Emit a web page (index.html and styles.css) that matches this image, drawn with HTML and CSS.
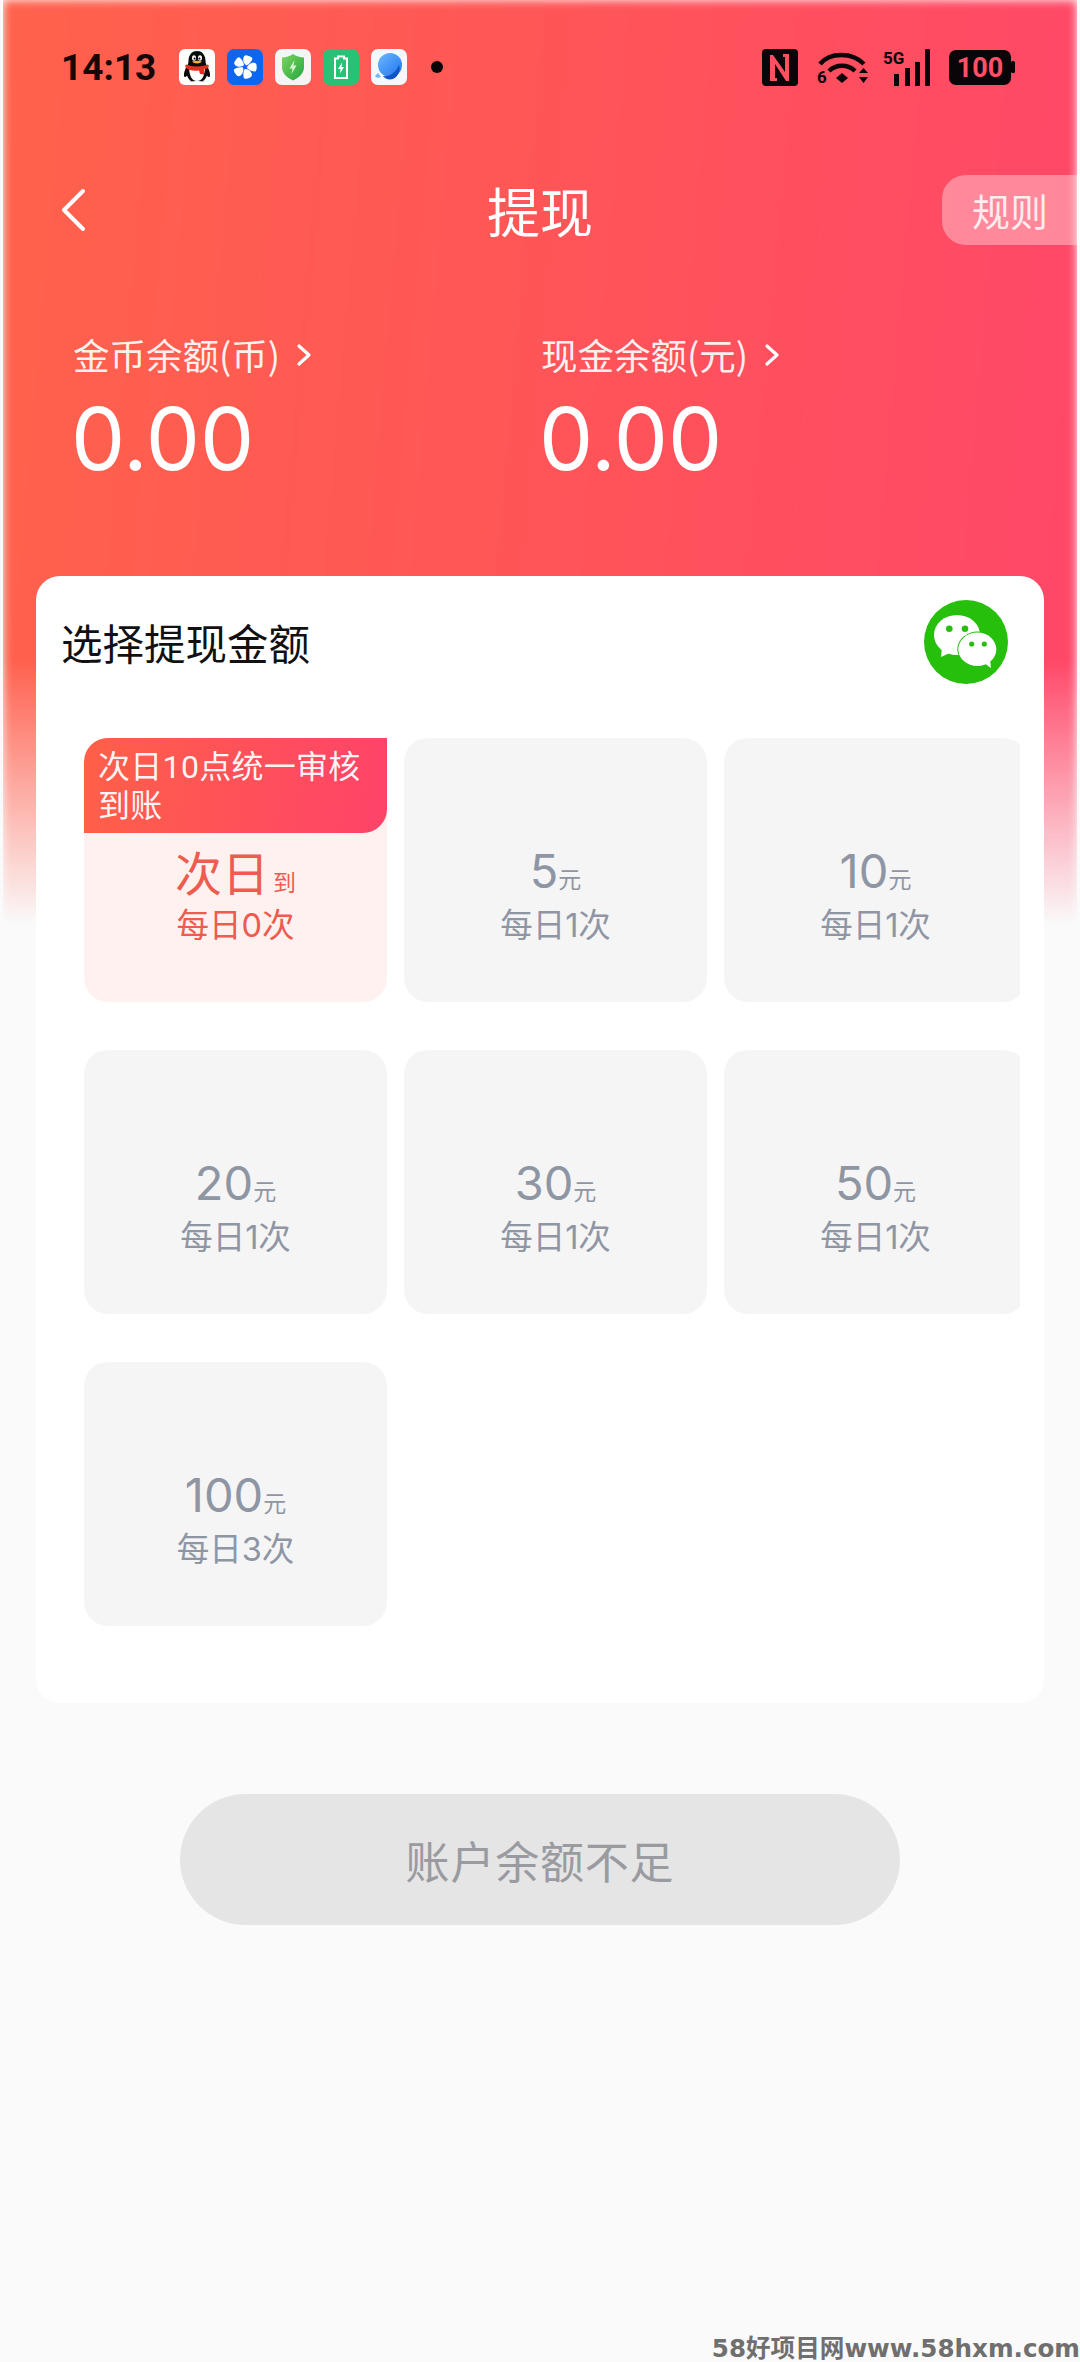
FILE: index.html
```html
<!DOCTYPE html>
<html lang="zh-CN">
<head>
<meta charset="utf-8">
<title>提现</title>
<link rel="stylesheet" href="styles.css">
</head>
<body>
<div class="page">
  <div class="hero-bg"></div>
  <div class="status">
    <span class="time">14:13</span>
    <svg class="app" viewBox="0 0 36 36"><rect width="36" height="36" rx="6" fill="#fff"/><path d="M18 2c-6 0-8.500 5-8.500 10 0 2-.5 3-1.500 5-2 3.500-3.500 7-3 10 .5 2 2 1 3-.5 1 3 3 5 4 5.500h12c1-.5 3-2.500 4-5.500 1 1.500 2.500 2.500 3 .5.500-3-1-6.500-3-10-1-2-1.500-3-1.500-5C26.500 7 24 2 18 2z" fill="#0b0b0b"/><path d="M10 20c1 8 3 12 8 12s7-4 8-12z" fill="#fff"/><path d="M7 15.500c6 2.500 16 2.500 22 0 1 1 1 2.500 0 3.500l-4 1.500 0 5-4-.5-1-3.500c-4 .5-7 0-9.500-.5l-3.500-2c-1-1-1-2.500 0-3.500z" fill="#e5301f"/><ellipse cx="15" cy="9" rx="2" ry="2.800" fill="#fff"/><ellipse cx="21" cy="9" rx="2" ry="2.800" fill="#fff"/><circle cx="15.500" cy="9.500" r="1" fill="#000"/><circle cx="20.500" cy="9.500" r="1" fill="#000"/><path d="M13 12.500c3-1 7-1 10 0-2 2.500-8 2.500-10 0z" fill="#f5b120"/><path d="M10 33c2-1.500 5-1.500 6.500 0zM19.500 33c2-1.500 5-1.500 6.500 0z" fill="#f5b120"/></svg>
    <svg class="app" viewBox="0 0 36 36"><rect width="36" height="36" rx="7" fill="#0e66ee"/><g fill="#fff"><path d="M19.500 16.500c-2.500-1.500-4-5-3-8 .5-1.500 2-2.500 3.500-2 2.500.5 5 1.500 5.500 3-1 3-3 5.500-6 7z"/><path d="M19.500 16.500c-2.500-1.500-4-5-3-8 .5-1.500 2-2.500 3.500-2 2.500.5 5 1.500 5.500 3-1 3-3 5.500-6 7z" transform="rotate(72 18 18)"/><path d="M19.500 16.500c-2.500-1.500-4-5-3-8 .5-1.500 2-2.500 3.500-2 2.500.5 5 1.500 5.500 3-1 3-3 5.500-6 7z" transform="rotate(144 18 18)"/><path d="M19.500 16.500c-2.500-1.500-4-5-3-8 .5-1.500 2-2.500 3.500-2 2.500.5 5 1.500 5.500 3-1 3-3 5.500-6 7z" transform="rotate(216 18 18)"/><path d="M19.500 16.500c-2.500-1.500-4-5-3-8 .5-1.500 2-2.500 3.500-2 2.500.5 5 1.500 5.500 3-1 3-3 5.500-6 7z" transform="rotate(288 18 18)"/></g></svg>
    <svg class="app" viewBox="0 0 36 36"><defs><linearGradient id="sg" x1="0" y1="0" x2="1" y2="1"><stop offset="0" stop-color="#7bd45c"/><stop offset="1" stop-color="#26a642"/></linearGradient></defs><rect width="36" height="36" rx="7" fill="#f3f6f4"/><path d="M18 5c3 2 7 3.500 11 3.500V18c0 6-4.500 10.500-11 13.500C11.500 28.500 7 24 7 18V8.500C11 8.500 15 7 18 5z" fill="url(#sg)"/><path d="M19.500 11l-5 8.500h3l-1 5.500 5-8.500h-3z" fill="#d8f5d0"/></svg>
    <svg class="app" viewBox="0 0 36 36"><rect width="36" height="36" rx="7" fill="#28c277"/><path d="M15 7.500h6v2h3v19.500H12V9.500h3z" fill="none" stroke="#fff" stroke-width="2"/><path d="M19 13.500l-4 6.500h2.500l-.5 4.500 4-6.500h-2.500z" fill="#fff"/></svg>
    <svg class="app" viewBox="0 0 36 36"><defs><linearGradient id="pg" x1="0" y1="0" x2="1" y2="1"><stop offset="0" stop-color="#6db8ff"/><stop offset="1" stop-color="#1c74ee"/></linearGradient></defs><rect width="36" height="36" rx="7" fill="#f4f8fc"/><circle cx="19" cy="16" r="12" fill="url(#pg)"/><path d="M4 27c1 2 4 2 6 1l-3-4z" fill="#6fb6ff"/><path d="M12 27c6 1 13-3 16-11 2 5-1 12-6 14-4 1-8 0-10-3z" fill="#1253c9"/></svg>
    <span class="dot"></span>
    <div class="status-right">
      <svg class="nfc" viewBox="0 0 36 37"><rect width="36" height="37" rx="4" fill="#0a0508"/><path d="M8 6h3l12 17V8h-2V5h6v27h-3L13 15v14h2v3H8z" fill="#ff5060"/></svg>
      <svg class="wifi" viewBox="0 0 54 37"><path d="M5 15C15 3 37 3 49 15" fill="none" stroke="#0a0508" stroke-width="4.500"/><path d="M14 22c7-7 19-7 26 0" fill="none" stroke="#0a0508" stroke-width="4.500"/><path d="M21 29l6-5 6 5-6 5z" fill="#0a0508"/><text class="wifi-six" x="2" y="34">6</text><path d="M44 24l4.500-5 4.500 5zM44 28l4.500 6 4.500-6z" fill="#0a0508"/></svg>
      <svg class="signal" viewBox="0 0 48 37"><text class="fiveg" x="0" y="15">5G</text><rect x="11" y="25" width="5" height="12" fill="#0a0508"/><rect x="22" y="19" width="5" height="18" fill="#0a0508"/><rect x="32" y="13" width="5" height="24" fill="#0a0508"/><rect x="42" y="0" width="5" height="37" rx="1" fill="#0a0508"/></svg>
      <svg class="battery" viewBox="0 0 66 35"><rect width="62" height="35" rx="7" fill="#0a0508"/><rect x="62" y="11" width="4" height="12" rx="1.500" fill="#0a0508"/><text class="batt-text" x="31" y="27">100</text></svg>
    </div>
  </div>

  <div class="nav">
    <svg class="back" viewBox="0 0 26 44"><path d="M23 3L4 22l19 19" fill="none" stroke="#fff" stroke-width="4" stroke-linecap="round" stroke-linejoin="round"/></svg>
    <h1 class="title">提现</h1>
    <div class="rule">规则</div>
  </div>

  <div class="balances">
    <div class="balance">
      <div class="label">金币余额(币)<svg class="chev" viewBox="0 0 16 24"><path d="M3 3l10 9-10 9" fill="none" stroke="#fff" stroke-width="3.200" stroke-linecap="round" stroke-linejoin="round"/></svg></div>
      <div class="amount">0.00</div>
    </div>
    <div class="balance">
      <div class="label">现金余额(元)<svg class="chev" viewBox="0 0 16 24"><path d="M3 3l10 9-10 9" fill="none" stroke="#fff" stroke-width="3.200" stroke-linecap="round" stroke-linejoin="round"/></svg></div>
      <div class="amount">0.00</div>
    </div>
  </div>

  <section class="card">
    <div class="card-head">
      <h2 class="card-title">选择提现金额</h2>
      <svg class="wechat" viewBox="0 0 84 84"><circle cx="42" cy="42" r="42" fill="#25bf0c"/><ellipse cx="33" cy="35" rx="23" ry="20" fill="#fff"/><path d="M18 47l-1 10 13-6z" fill="#fff"/><ellipse cx="53.300" cy="49.300" rx="20" ry="17.700" fill="#25bf0c"/><ellipse cx="53.300" cy="49.300" rx="19" ry="16.700" fill="#fff"/><path d="M60 63l7 5-1-9z" fill="#fff"/><circle cx="25.300" cy="28.700" r="3.300" fill="#25bf0c"/><circle cx="41" cy="28.700" r="3.300" fill="#25bf0c"/><circle cx="47.700" cy="44" r="2.600" fill="#25bf0c"/><circle cx="60.300" cy="44" r="2.600" fill="#25bf0c"/></svg>
    </div>
    <div class="grid-clip">
      <div class="grid">
        <div class="tile active">
          <div class="badge">次日10点统一审核到账</div>
          <div class="num"><span class="big big-cjk">次日</span><span class="unit unit-gap">到</span></div>
          <div class="sub">每日0次</div>
        </div>
        <div class="tile"><div class="num"><span class="big">5</span><span class="unit">元</span></div><div class="sub">每日1次</div></div>
        <div class="tile"><div class="num"><span class="big">10</span><span class="unit">元</span></div><div class="sub">每日1次</div></div>
        <div class="tile"><div class="num"><span class="big">20</span><span class="unit">元</span></div><div class="sub">每日1次</div></div>
        <div class="tile"><div class="num"><span class="big">30</span><span class="unit">元</span></div><div class="sub">每日1次</div></div>
        <div class="tile"><div class="num"><span class="big">50</span><span class="unit">元</span></div><div class="sub">每日1次</div></div>
        <div class="tile"><div class="num"><span class="big">100</span><span class="unit">元</span></div><div class="sub">每日3次</div></div>
      </div>
    </div>
  </section>

  <button class="submit" type="button">账户余额不足</button>

  <div class="watermark">58好项目网www.58hxm.com</div>
</div>
</body>
</html>
```
FILE: styles.css
```css
* { box-sizing: border-box; }
html, body { margin: 0; padding: 0; }
body {
  background: #fafafa;
  font-family: Roboto, "Noto Sans CJK SC", sans-serif;
  color: #111;
}
.page {
  position: relative;
  width: 1080px;
  height: 2362px;
  overflow: hidden;
  background: #fafafa;
}
.hero-bg {
  position: absolute;
  left: 3px;
  right: 3px;
  top: 0;
  height: 930px;
  background: linear-gradient(95deg, #ff624c 0%, #ff5656 45%, #ff4769 100%);
  -webkit-mask-image: linear-gradient(180deg, #000 0, #000 660px, transparent 925px);
  mask-image: linear-gradient(180deg, #000 0, #000 660px, transparent 925px);
  filter: blur(5px);
}
.status {
  position: relative;
  height: 134px;
  padding: 0 65px 0 61px;
  display: flex;
  align-items: center;
  gap: 12px;
}
.time {
  width: 106px;
  font: 700 37px "Roboto", sans-serif;
  color: #160606;
}
.app { width: 36px; height: 36px; display: block; }
.dot {
  width: 12px;
  height: 12px;
  margin-left: 12px;
  border-radius: 50%;
  background: #0a0508;
}
.status-right {
  margin-left: auto;
  display: flex;
  align-items: center;
  gap: 14px;
}
.nfc { width: 36px; height: 37px; margin-right: 3px; display: block; }
.wifi { width: 54px; height: 37px; display: block; }
.signal { width: 48px; height: 37px; margin-right: 4px; display: block; }
.battery { width: 66px; height: 35px; display: block; }
.wifi-six { font: 700 17px Roboto, sans-serif; fill: #0a0508; }
.fiveg { font: 700 17px Roboto, sans-serif; fill: #0a0508; }
.batt-text { font: 700 27px Roboto, sans-serif; fill: #ff5068; text-anchor: middle; }
.nav {
  position: relative;
  height: 70px;
  margin-top: 41px;
  display: grid;
  grid-template-columns: 1fr auto 1fr;
  align-items: center;
}
.back { width: 26px; height: 44px; margin-left: 60px; display: block; }
.title {
  margin: 0;
  font: 400 53px/70px "Noto Sans CJK SC", sans-serif;
  color: #fff;
}
.rule {
  justify-self: end;
  width: 138px;
  height: 70px;
  padding-left: 30px;
  border-radius: 24px 0 0 24px;
  background: rgba(255, 255, 255, 0.35);
  font: 400 38px/70px "Noto Sans CJK SC", sans-serif;
  color: rgba(255, 255, 255, 0.85);
}
.balances {
  position: relative;
  margin-top: 85px;
  padding-left: 73px;
  display: grid;
  grid-template-columns: 468px 1fr;
}
.label {
  height: 50px;
  display: flex;
  align-items: center;
  font: 400 36.500px/50px "Noto Sans CJK SC", sans-serif;
  color: rgba(255, 255, 255, 0.92);
}
.chev { width: 16px; height: 24px; margin-left: 16px; display: block; }
.amount {
  margin: 9px 0 0 -2px;
  font: 400 86px/100px Inter, Roboto, sans-serif;
  color: #fff;
}
.card {
  position: relative;
  height: 1127px;
  margin: 87px 36px 0;
  border-radius: 24px;
  background: #fff;
  padding-top: 24px;
}
.card-head {
  height: 84px;
  padding: 0 36px 0 25px;
  display: flex;
  align-items: center;
  justify-content: space-between;
}
.card-title {
  margin: 0;
  font: 400 41.500px/60px "Noto Sans CJK SC", sans-serif;
  color: #111;
}
.wechat { width: 84px; height: 84px; display: block; }
.grid-clip {
  width: 936px;
  margin: 54px 0 0 48px;
  overflow: hidden;
}
.grid {
  display: grid;
  grid-template-columns: repeat(3, 303px);
  grid-auto-rows: 264px;
  column-gap: 17px;
  row-gap: 48px;
}
.tile {
  position: relative;
  padding-top: 100px;
  border-radius: 24px;
  background: #f5f5f6;
  color: #8f96a3;
  text-align: center;
}
.active { background: #fff1f0; color: #ee5b4f; }
.badge {
  position: absolute;
  top: 0;
  left: 0;
  right: 0;
  height: 95px;
  padding: 10px 14px 0;
  border-radius: 24px 0 24px 0;
  background: linear-gradient(95deg, #ff6048, #ff4369);
  color: rgba(255, 255, 255, 0.95);
  font: 400 32px/39px Roboto, "Noto Sans CJK SC", sans-serif;
  letter-spacing: 0.3px;
  text-align: left;
}
.num {
  height: 66px;
  display: flex;
  justify-content: center;
  align-items: baseline;
  line-height: 66px;
}
.big { font: 400 47px/66px Inter, "Noto Sans CJK SC", sans-serif; }
.big-cjk { font: 400 47px/66px "Noto Sans CJK SC", sans-serif; }
.unit { font: 400 23px/66px "Noto Sans CJK SC", sans-serif; }
.unit-gap { margin-left: 4px; }
.sub { font: 400 32.500px/44px Inter, "Noto Sans CJK SC", sans-serif; }
.submit {
  position: relative;
  display: block;
  width: 720px;
  height: 131px;
  margin: 91px auto 0;
  border: 0;
  border-radius: 66px;
  background: #e5e5e5;
  color: #999ba0;
  font: 400 44px/131px "Noto Sans CJK SC", sans-serif;
  letter-spacing: 0.8px;
}
.watermark {
  position: absolute;
  right: 0;
  bottom: 0;
  font: 700 24.600px/26px "DejaVu Sans", "Noto Sans CJK SC", sans-serif;
  color: #6f6f6f;
  white-space: nowrap;
}
```
